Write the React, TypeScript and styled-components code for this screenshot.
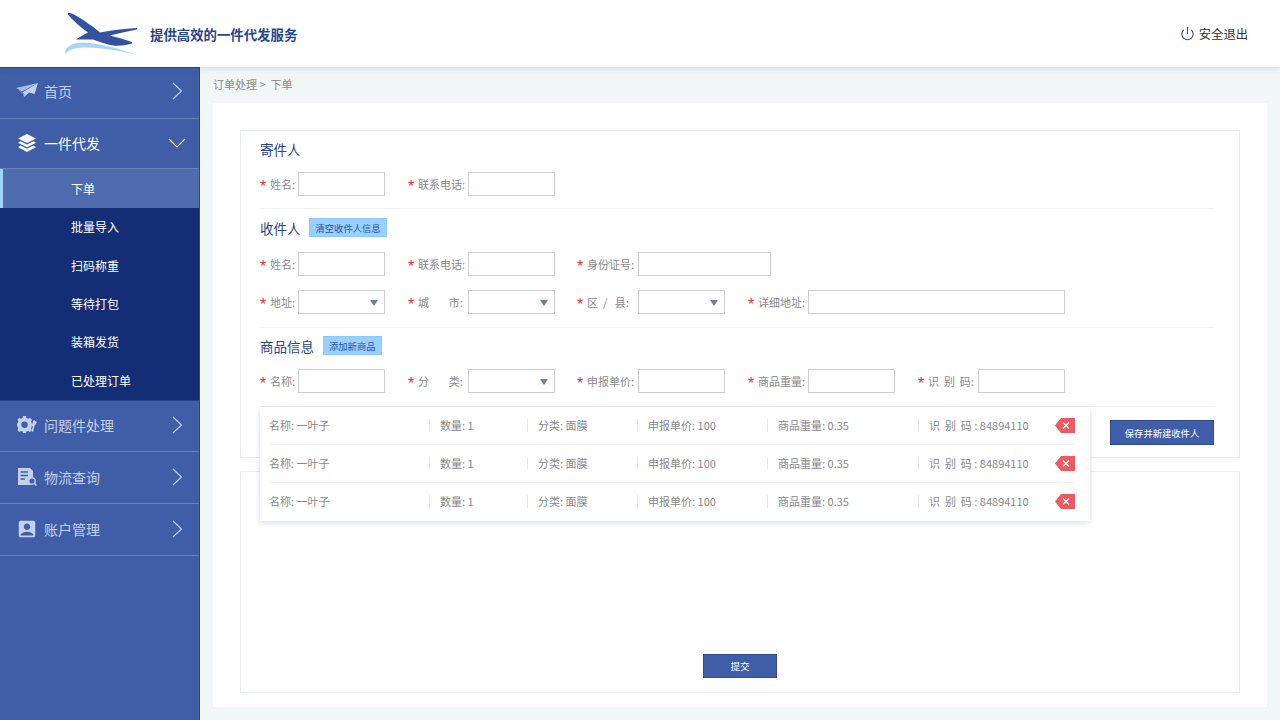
import * as React from 'react';
import styled, { createGlobalStyle } from 'styled-components';
import { Power } from 'lucide-react';
import { MdAccountBox } from 'react-icons/md';

const GlobalStyle = createGlobalStyle`
  html, body {
    margin: 0;
    padding: 0;
    background: #f1f6f6;
  }
  * {
    box-sizing: border-box;
  }
  body {
    font-family: "Noto Sans CJK SC", "Liberation Sans", sans-serif;
  }
`;

const Page = styled.div`
  width: 1280px;
  height: 720px;
  overflow: hidden;
  display: flex;
  flex-direction: column;
`;

const Header = styled.header`
  height: 67px;
  flex: none;
  display: flex;
  align-items: center;
  padding: 0 32px 0 65px;
  background: #fff;
  box-shadow: 0 1px 6px rgba(60, 80, 120, 0.18);
  position: relative;
  z-index: 2;
`;

const Slogan = styled.div`
  margin-left: 13px;
  font-size: 13.4px;
  font-weight: 700;
  color: #27458f;
`;

const Logout = styled.div`
  margin-left: auto;
  display: flex;
  align-items: center;
  gap: 4px;
  font-size: 12.3px;
  color: #333;
  svg {
    color: #2b55a8;
  }
`;

const Body = styled.div`
  flex: 1;
  display: flex;
  min-height: 0;
`;

const Sidebar = styled.nav`
  width: 200px;
  flex: none;
  background: #3f5ea7;
  border-right: 1px solid #2a4490;
  box-shadow: inset 0 1px 0 #2a4490;
`;

const MenuItem = styled.div<{ $h: number; $pb?: number; $active?: boolean }>`
  height: ${(p) => p.$h}px;
  display: flex;
  align-items: center;
  padding: 0 13px ${(p) => p.$pb ?? 4}px 16px;
  border-bottom: 1px solid #6580bd;
  font-size: 14px;
  color: ${(p) => (p.$active ? '#fff' : '#c3d0ee')};
`;

const MenuIcon = styled.span`
  width: 28px;
  display: flex;
  align-items: center;
  flex: none;
`;

const MenuLabel = styled.span`
  flex: 1;
`;

const AccountIcon = styled(MdAccountBox)`
  flex: none;
`;

const SubMenu = styled.div`
  background: #132e75;
  border-bottom: 1px solid #2a4490;
`;

const SubItem = styled.div<{ $active?: boolean }>`
  height: ${(p) => (p.$active ? 39 : 38.4)}px;
  display: flex;
  align-items: center;
  padding-left: ${(p) => (p.$active ? 68 : 71)}px;
  padding-bottom: 1px;
  font-size: 12px;
  color: #fff;
  background: ${(p) => (p.$active ? '#4f6cae' : 'transparent')};
  border-left: ${(p) => (p.$active ? '3px solid #9fd4ff' : 'none')};
`;

const Main = styled.main`
  flex: 1;
  padding: 0 13px 13px;
  display: flex;
  flex-direction: column;
  min-width: 0;
`;

const Crumb = styled.div`
  height: 36px;
  flex: none;
  display: flex;
  align-items: center;
  padding-bottom: 2px;
  font-size: 11px;
  color: #8a8a8a;
  white-space: pre;
`;

const Panel = styled.section`
  flex: 1;
  background: #fff;
  padding: 27px 27px 14px;
  display: flex;
  flex-direction: column;
  gap: 13px;
`;

const Card = styled.div`
  border: 1px solid #ebeef2;
`;

const FormCard = styled(Card)`
  height: 328px;
  padding: 0 25px 0 19px;
  position: relative;
`;

const SubmitCard = styled(Card)`
  flex: 1;
  display: flex;
  align-items: flex-end;
  justify-content: center;
  padding-bottom: 14px;
`;

const Block = styled.div`
  border-bottom: 1px solid #eff1f3;
`;

const TitleRow = styled.div<{ $h: number }>`
  height: ${(p) => p.$h}px;
  display: flex;
  align-items: center;
  gap: 8.5px;
  padding-bottom: 6px;
`;

const Title = styled.h3`
  margin: 0;
  font-size: 13.5px;
  font-weight: 400;
  color: #27458f;
`;

const TagButton = styled.button`
  height: 19px;
  padding: 0 5.5px;
  border: 1px solid #8cc9ff;
  background: #9ad0ff;
  color: #2c55a3;
  font-family: inherit;
  font-size: 9.3px;
`;

const FieldRow = styled.div<{ $mb: number }>`
  display: grid;
  grid-template-columns: 148px 169px 171px 170px 1fr;
  margin-bottom: ${(p) => p.$mb}px;
`;

const Field = styled.div`
  display: flex;
  align-items: center;
  height: 24px;
`;

const Label = styled.label<{ $w: number }>`
  width: ${(p) => p.$w}px;
  flex: none;
  display: flex;
  align-items: center;
  font-size: 11px;
  color: #8a8a8a;
  white-space: pre;
`;

const Star = styled.span`
  font-family: "Liberation Sans", sans-serif;
  color: #e8302f;
  font-size: 16px;
  width: 10px;
  flex: none;
  line-height: 1;
  padding-top: 5px;
`;

const TextInput = styled.div<{ $w: number }>`
  width: ${(p) => p.$w}px;
  flex: none;
  height: 24px;
  border: 1px solid #cfcfcf;
  background: #fff;
  position: relative;
`;

const Caret = styled.span`
  position: absolute;
  right: 6px;
  top: 9px;
  width: 0;
  height: 0;
  border-left: 4px solid transparent;
  border-right: 4px solid transparent;
  border-top: 6px solid #6a7fa8;
`;

const SaveButton = styled.button`
  position: absolute;
  right: 25px;
  top: 289px;
  width: 104px;
  height: 25px;
  padding: 0;
  border: 1px solid #2c4a96;
  background: #3f5ea7;
  color: #fff;
  font-family: inherit;
  font-size: 9.3px;
`;

const GoodsList = styled.div`
  position: absolute;
  left: 19px;
  top: 276px;
  width: 830px;
  height: 114px;
  background: #fff;
  box-shadow: 0 2px 6px rgba(70, 90, 140, 0.2);
  padding: 0 15px 0 9px;
  z-index: 1;
`;

const GoodsRow = styled.div`
  height: 38px;
  display: grid;
  grid-template-columns: 160px 98px 110px 130px 151px 137px 20px;
  align-items: center;
  font-size: 11px;
  color: #8a8a8a;
  border-bottom: 1px solid #f0f1f3;
  &:last-child {
    border-bottom-color: transparent;
  }
`;

const GoodsCell = styled.div<{ $first?: boolean }>`
  white-space: pre;
  padding-left: ${(p) => (p.$first ? 0 : 10)}px;
  border-left: ${(p) => (p.$first ? 'none' : '1px solid #e6e7ea')};
  line-height: 13px;
`;

const SubmitButton = styled.button`
  width: 74px;
  height: 24px;
  padding: 0;
  border: 1px solid #2c4a96;
  background: #3f5ea7;
  color: #fff;
  font-family: inherit;
  font-size: 9.5px;
`;

const Chevron = ({ down }: { down?: boolean }) =>
  down ? (
    <svg width="18" height="12" viewBox="0 0 18 12" fill="none">
      <polyline points="1,2 9,10 17,2" stroke="currentColor" strokeWidth="1.1" />
    </svg>
  ) : (
    <svg width="18" height="18" viewBox="0 0 18 18" fill="none">
      <polyline points="5,1 13.5,9 5,17" stroke="currentColor" strokeWidth="1.1" />
    </svg>
  );

const Logo = () => (
  <svg width="72" height="46" viewBox="0 -1.5 72 46">
    <path
      d="M3 2 C2 0 5 0 9 2 C18 7 28 14 35 20 C46 18 58 16 72 15.5 L72 17 C62 19 53 21 45 23 C52 25 60 27 67 29.5 L67 31 C60 33 54 33.5 48 33 C42 32 34 29 28 27 C22 27 16 27 11 27 C15 24 19 22 23 20 C16 15 8 8 3 2 Z"
      fill="#33539f"
    />
    <path
      d="M0 41 C0 34 8 30 18 30 C36 31 54 36 70 42 C54 38 36 35 20 35 C10 35 4 37 1 41 Z"
      fill="#a5d6fb"
    />
  </svg>
);

const PlaneIcon = () => (
  <svg width="22" height="16" viewBox="0 0 22 16">
    <path d="M0 5 L22 0 L6 8.5 Z" fill="#a9bbe2" />
    <path d="M7 9 L22 0 L18.5 11 L13 9.5 L8 14 Z" fill="#c3d0ee" />
    <path d="M3 7 L9 12 M5 8.5 L8 12" stroke="#7f97cf" strokeWidth="0.7" />
  </svg>
);

const StackIcon = () => (
  <svg width="20" height="18" viewBox="-2 0 20 18" fill="#fff">
    <path d="M9 0 L18 4.5 L9 9 L0 4.5 Z" />
    <path d="M2.5 7.2 L9 10.5 L15.5 7.2 L18 8.8 L9 13.2 L0 8.8 Z" />
    <path d="M2.5 11.6 L9 14.8 L15.5 11.6 L18 13.2 L9 18 L0 13.2 Z" />
  </svg>
);

const GearIcon = () => (
  <svg width="21" height="17" viewBox="-1 0 21 17" fill="#c3d0ee">
    <path
      fillRule="evenodd"
      d="M6 0 H9 L9.5 2 L11.3 2.8 L13 1.7 L15 3.8 L14 5.5 L14.7 7.2 L16 7.6 V10 L14.7 10.6 L14 12.2 L15 14 L13 16 L11.3 15 L9.5 15.6 L9 17 H6 L5.6 15.6 L3.8 15 L2 16 L0.5 14 L1.3 12.2 L0.6 10.6 L0 10 V7.6 L0.6 7.2 L1.3 5.5 L0.5 3.8 L2 1.7 L3.8 2.8 L5.6 2 Z M7.5 5.6 A3.2 3.2 0 1 0 7.6 12 A3.2 3.2 0 1 0 7.5 5.6 Z"
    />
    <path d="M17 4 L20 6 L17.5 10 L16 16 L14.6 15.4 L16 9.5 L15.6 6 Z" />
  </svg>
);

const ReportIcon = () => (
  <svg width="21" height="18" viewBox="-2 0 21 18">
    <path d="M0 0 H12 L15 3 V17 H0 Z" fill="#c3d0ee" />
    <path d="M2.5 4 H10 M2.5 7.5 H10 M2.5 11 H7" stroke="#3f5ea7" strokeWidth="1.4" />
    <circle cx="14" cy="13" r="3.2" fill="#3f5ea7" stroke="#c3d0ee" strokeWidth="1.3" />
    <path d="M16 15 L18.5 17.5" stroke="#c3d0ee" strokeWidth="1.5" />
  </svg>
);

const DeleteIcon = () => (
  <svg width="20" height="15" viewBox="0 0 20 15">
    <path d="M0 7.5 L6 0 H20 V15 H6 Z" fill="#ee5a60" />
    <path d="M8 4.5 L14 10.5 M14 4.5 L8 10.5" stroke="#fff" strokeWidth="1.2" />
  </svg>
);

const subItems = ['下单', '批量导入', '扫码称重', '等待打包', '装箱发货', '已处理订单'];

const goodsCells = [
  '名称: 一叶子',
  '数量: 1',
  '分类: 面膜',
  '申报单价: 100',
  '商品重量: 0.35',
  '识  别  码 : 84894110',
];

const FormField = ({
  label,
  labelWidth,
  inputWidth = 87,
  select,
}: {
  label: string;
  labelWidth: number;
  inputWidth?: number;
  select?: boolean;
}) => (
  <Field>
    <Label $w={labelWidth}>
      <Star>*</Star>
      {label}
    </Label>
    <TextInput $w={inputWidth}>{select && <Caret />}</TextInput>
  </Field>
);

const App = (): React.ReactElement => {
  return (
    <Page>
      <GlobalStyle />
      <Header>
        <Logo />
        <Slogan>提供高效的一件代发服务</Slogan>
        <Logout>
          <Power size={15} strokeWidth={1.8} />
          安全退出
        </Logout>
      </Header>
      <Body>
        <Sidebar>
          <MenuItem $h={52}>
            <MenuIcon>
              <PlaneIcon />
            </MenuIcon>
            <MenuLabel>首页</MenuLabel>
            <Chevron />
          </MenuItem>
          <MenuItem $h={50} $pb={2} $active>
            <MenuIcon>
              <StackIcon />
            </MenuIcon>
            <MenuLabel>一件代发</MenuLabel>
            <Chevron down />
          </MenuItem>
          <SubMenu>
            {subItems.map((item, i) => (
              <SubItem key={item} $active={i === 0}>
                {item}
              </SubItem>
            ))}
          </SubMenu>
          <MenuItem $h={51} $pb={2}>
            <MenuIcon>
              <GearIcon />
            </MenuIcon>
            <MenuLabel>问题件处理</MenuLabel>
            <Chevron />
          </MenuItem>
          <MenuItem $h={52} $pb={0}>
            <MenuIcon>
              <ReportIcon />
            </MenuIcon>
            <MenuLabel>物流查询</MenuLabel>
            <Chevron />
          </MenuItem>
          <MenuItem $h={52} $pb={0}>
            <MenuIcon>
              <AccountIcon size={22} />
            </MenuIcon>
            <MenuLabel>账户管理</MenuLabel>
            <Chevron />
          </MenuItem>
        </Sidebar>
        <Main>
          <Crumb>订单处理 &gt;  下单</Crumb>
          <Panel>
            <FormCard>
              <Block>
                <TitleRow $h={41}>
                  <Title>寄件人</Title>
                </TitleRow>
                <FieldRow $mb={12}>
                  <FormField label="姓名:" labelWidth={38} />
                  <FormField label="联系电话:" labelWidth={60} />
                </FieldRow>
              </Block>
              <Block>
                <TitleRow $h={43}>
                  <Title>收件人</Title>
                  <TagButton>清空收件人信息</TagButton>
                </TitleRow>
                <FieldRow $mb={14}>
                  <FormField label="姓名:" labelWidth={38} />
                  <FormField label="联系电话:" labelWidth={60} />
                  <FormField label="身份证号:" labelWidth={61} inputWidth={133} />
                </FieldRow>
                <FieldRow $mb={13}>
                  <FormField label="地址:" labelWidth={38} select />
                  <FormField label={'城        市:'} labelWidth={60} select />
                  <FormField label={'区  /   县:'} labelWidth={61} select />
                  <FormField label="详细地址:" labelWidth={60} inputWidth={257} />
                </FieldRow>
              </Block>
              <Block>
                <TitleRow $h={41}>
                  <Title>商品信息</Title>
                  <TagButton>添加新商品</TagButton>
                </TitleRow>
                <FieldRow $mb={13}>
                  <FormField label="名称:" labelWidth={38} />
                  <FormField label={'分        类:'} labelWidth={60} select />
                  <FormField label="申报单价:" labelWidth={61} />
                  <FormField label="商品重量:" labelWidth={60} />
                  <FormField label={'识  别  码:'} labelWidth={60} />
                </FieldRow>
              </Block>
              <GoodsList>
                {[0, 1, 2].map((row) => (
                  <GoodsRow key={row}>
                    {goodsCells.map((cell, i) => (
                      <GoodsCell key={cell} $first={i === 0}>
                        {cell}
                      </GoodsCell>
                    ))}
                    <DeleteIcon />
                  </GoodsRow>
                ))}
              </GoodsList>
              <SaveButton>保存并新建收件人</SaveButton>
            </FormCard>
            <SubmitCard>
              <SubmitButton>提交</SubmitButton>
            </SubmitCard>
          </Panel>
        </Main>
      </Body>
    </Page>
  );
};

export default App;
